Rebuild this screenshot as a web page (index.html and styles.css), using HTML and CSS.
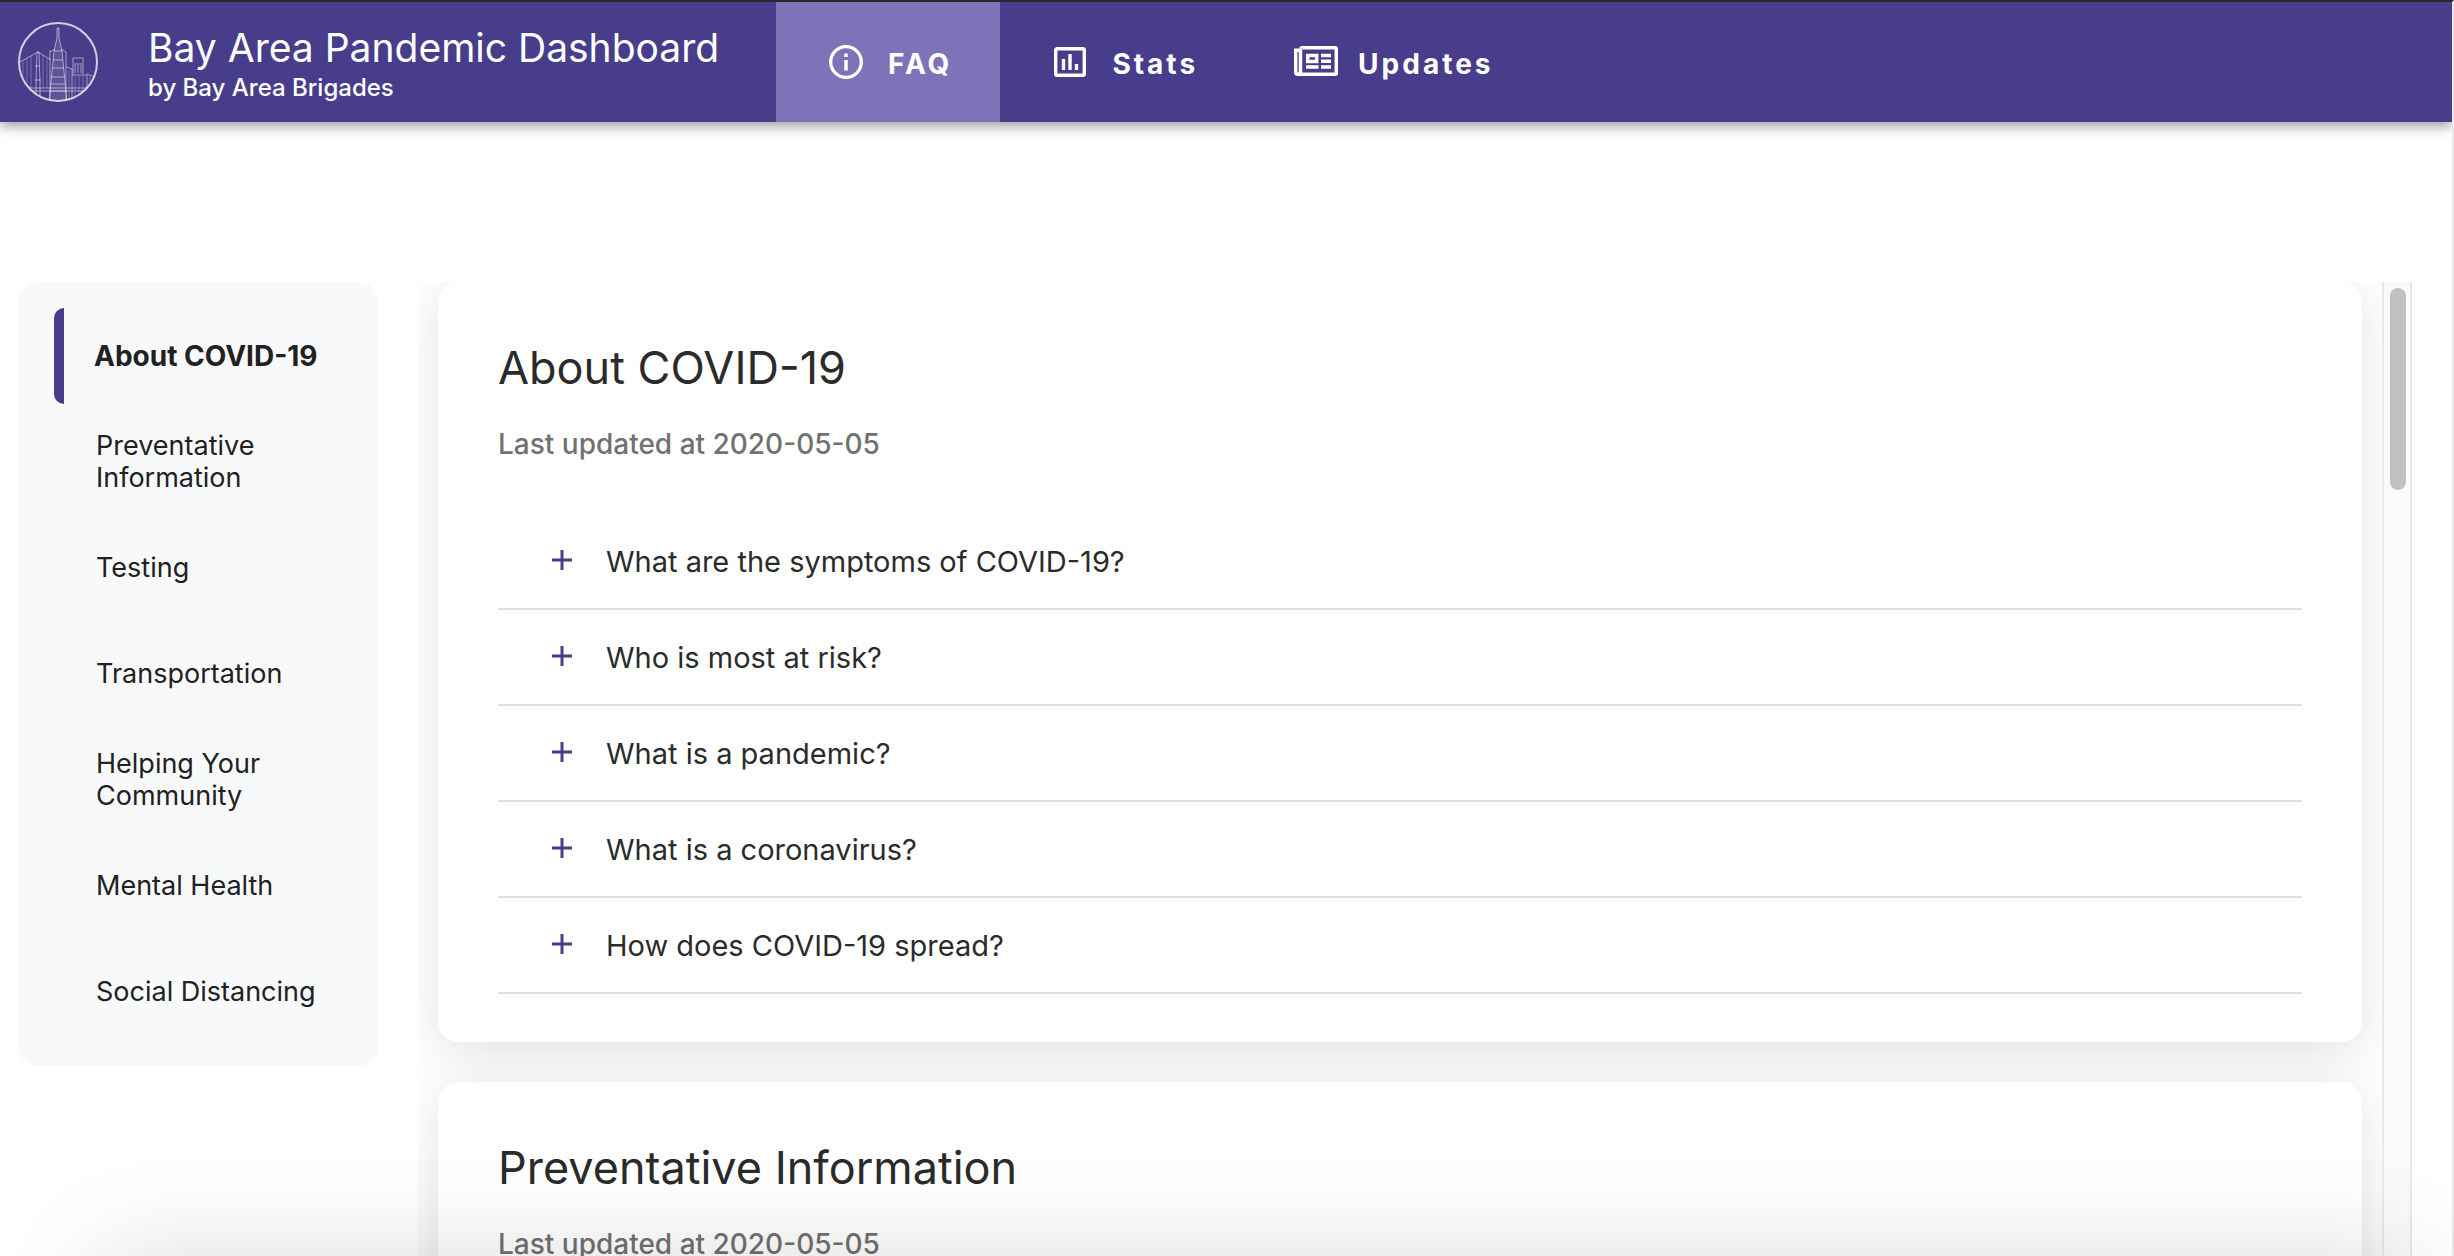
FILE: index.html
```html
<!DOCTYPE html>
<html lang="en">
<head>
  <meta charset="utf-8">
  <title>Bay Area Pandemic Dashboard</title>
  <link rel="stylesheet" href="styles.css">
</head>
<body>
  <header class="header">
    <svg class="logo" viewBox="0 0 80 80" fill="none" stroke="#fff" aria-hidden="true">
      <defs><clipPath id="disc"><circle cx="40" cy="40" r="39"/></clipPath></defs>
      <g clip-path="url(#disc)" stroke-opacity=".5">
        <path d="M2 40L20 30L33 38M0 66H80M0 69H80"/>
        <path d="M18 80V60L19 30H21L22 60V80M17 44H22M17 58H23"/>
        <path d="M5 39V66M9 36V66M13 34V66M25 33V66M29 36V66" stroke-opacity=".25"/>
        <path d="M31 80L36 29L39 16V6H41V16L44 29L49 80Z" fill="#fff" fill-opacity=".12"/>
        <path d="M36 29H44M35 38H45M34 46H46M33 55H47M33 62H47M32 69H48M32 28V80M32 30L37 27M43 27L48 30V80"/>
        <path d="M48 45L54 47V80M55 36H65V52M55 36V52M56 42H64M57 43V51M60 43V51M63 43V51M54 53H69V80M69 52L77 55"/>
        <path d="M57 54V80M61 54V80M65 54V80M72 54V80M76 56V80M51 48V80" stroke-opacity=".25"/>
      </g>
      <circle cx="40" cy="40" r="39" stroke-width="2" stroke-opacity=".75"/>
    </svg>
    <div class="brand">
      <h1 class="brand-title">Bay Area Pandemic Dashboard</h1>
      <p class="brand-sub">by Bay Area Brigades</p>
    </div>
    <nav class="tabs" aria-label="Sections">
      <a class="tab tab-active" href="#faq">
        <svg class="tab-icon" viewBox="0 0 44 34" fill="none" stroke="#fff" aria-hidden="true"><circle cx="22" cy="17" r="15.300" stroke-width="3.300"/><path d="M22 8.500V12M22 15V25.500" stroke-width="3.500"/></svg>
        FAQ
      </a>
      <a class="tab" href="#stats">
        <svg class="tab-icon" viewBox="0 0 44 34" fill="none" stroke="#fff" aria-hidden="true"><rect x="7.700" y="3.700" width="28.600" height="26.600" rx="1.500" stroke-width="3.400"/><path d="M15.500 14V25M22 9V25M28.500 19V25" stroke-width="3.400"/></svg>
        Stats
      </a>
      <a class="tab" href="#updates">
        <svg class="tab-icon" viewBox="0 0 44 34" fill="none" stroke="#fff" stroke-width="3.500" aria-hidden="true"><path d="M7 3.700Q7 2.700 8 2.700H41.300Q42.300 2.700 42.300 3.700V28.200Q42.300 29.200 41.300 29.200H3.700Q1.700 29.200 1.700 27.200V5.200H6M6.500 4V26Q6.500 29.200 4 29.200"/><rect x="13.700" y="10.500" width="9" height="6"/><path d="M27 10.500H37M27 16.200H37M27 22H37M12 22H24.500"/></svg>
        Updates
      </a>
    </nav>
  </header>

  <div class="layout" id="faq">
    <nav class="sidebar" aria-label="Topics">
      <a class="topic topic-active" href="#about">About COVID-19</a>
      <a class="topic" href="#preventative">Preventative Information</a>
      <a class="topic" href="#testing">Testing</a>
      <a class="topic" href="#transportation">Transportation</a>
      <a class="topic" href="#helping">Helping Your Community</a>
      <a class="topic" href="#mental">Mental Health</a>
      <a class="topic" href="#distancing">Social Distancing</a>
    </nav>

    <main class="cards">
      <section class="card" id="about">
        <h2 class="card-title">About COVID-19</h2>
        <p class="card-date">Last updated at 2020-05-05</p>
        <div class="questions">
          <button class="question" type="button"><svg class="plus" viewBox="0 0 20 20" aria-hidden="true"><path d="M10 0V20M0 10H20"/></svg>What are the symptoms of COVID-19?</button>
          <button class="question" type="button"><svg class="plus" viewBox="0 0 20 20" aria-hidden="true"><path d="M10 0V20M0 10H20"/></svg>Who is most at risk?</button>
          <button class="question" type="button"><svg class="plus" viewBox="0 0 20 20" aria-hidden="true"><path d="M10 0V20M0 10H20"/></svg>What is a pandemic?</button>
          <button class="question" type="button"><svg class="plus" viewBox="0 0 20 20" aria-hidden="true"><path d="M10 0V20M0 10H20"/></svg>What is a coronavirus?</button>
          <button class="question" type="button"><svg class="plus" viewBox="0 0 20 20" aria-hidden="true"><path d="M10 0V20M0 10H20"/></svg>How does COVID-19 spread?</button>
        </div>
      </section>
      <section class="card" id="preventative">
        <h2 class="card-title">Preventative Information</h2>
        <p class="card-date">Last updated at 2020-05-05</p>
      </section>
    </main>
    <div class="track" aria-hidden="true"><div class="thumb"></div></div>
  </div>
  <div class="dock" aria-hidden="true"></div>
</body>
</html>
```

FILE: styles.css
```css
* {
  box-sizing: border-box;
}

html {
  background: #fff;
}

body {
  margin: 0;
  height: 100vh;
  display: flex;
  flex-direction: column;
  overflow: hidden;
  border-top: 2px solid #282828;
  border-right: 2px solid #e8e8e8;
  color: #212121;
  font-family: Inter, "Liberation Sans", sans-serif;
}

h1,
h2,
p {
  margin: 0;
  font-weight: 400;
}

a {
  color: inherit;
  text-decoration: none;
}

.header {
  flex: none;
  display: flex;
  align-items: center;
  height: 120px;
  background: #483d8b;
  color: #fff;
  box-shadow: 0 4px 12px rgba(0, 0, 0, 0.4);
}

.logo {
  width: 80px;
  height: 80px;
  margin: 0 50px 0 18px;
}

.brand {
  width: 628px;
  padding-top: 4px;
  white-space: nowrap;
}

.brand-title {
  font-size: 39px;
  line-height: 48px;
}

.brand-sub {
  font-size: 24px;
  line-height: 32px;
  font-weight: 500;
}

.tabs {
  display: flex;
  align-self: stretch;
}

.tab {
  display: flex;
  align-items: center;
  gap: 20px;
  padding: 4px 48px 0;
  font-size: 28px;
  font-weight: 700;
  letter-spacing: 3px;
}

.tab-icon {
  width: 44px;
  height: 34px;
  margin-bottom: 4px;
}

.tab-active {
  background: #7e72b9;
}

.layout {
  flex: 1;
  min-height: 0;
  display: flex;
  align-items: flex-start;
  margin-top: 160px;
  padding: 0 40px 0 18px;
}

.sidebar {
  flex: none;
  display: flex;
  flex-direction: column;
  gap: 10px;
  width: 360px;
  padding: 26px 36px;
  border-radius: 20px;
  background: #f8f9fb;
}

.topic {
  display: flex;
  align-items: center;
  height: 96px;
  padding: 0 20px 0 42px;
  font-size: 27px;
  line-height: 32px;
}

.topic-active {
  padding: 0 0 0 30px;
  border-left: 10px solid #483d8b;
  border-radius: 10px 0 0 10px;
  font-size: 28px;
  font-weight: 700;
  white-space: nowrap;
}

.cards {
  flex: 1;
  align-self: stretch;
  display: flex;
  flex-direction: column;
  gap: 40px;
  margin-left: 40px;
  padding: 0 20px;
  overflow: hidden;
}

.card {
  flex: none;
  padding: 48px 60px;
  border-radius: 20px;
  background: #fff;
  box-shadow: 0 10px 50px rgba(0, 0, 0, 0.12);
}

.card-title {
  padding-top: 2px;
  font-size: 45px;
  line-height: 72px;
  color: #2b2b2b;
}

.card-date {
  margin: 22px 0 52px;
  font-size: 28px;
  line-height: 36px;
  font-weight: 500;
  color: #717171;
}

.question {
  display: flex;
  align-items: center;
  gap: 34px;
  width: 100%;
  height: 96px;
  padding: 0 54px;
  border: 0;
  border-bottom: 2px solid #dfdfdf;
  background: none;
  color: #2b2b2b;
  font-family: inherit;
  font-size: 29px;
  text-align: left;
}

.plus {
  width: 20px;
  height: 20px;
  margin-bottom: 2px;
  stroke: #483d8b;
  stroke-width: 3;
}

.track {
  flex: none;
  align-self: stretch;
  width: 30px;
  padding: 6px;
  border: solid #e8e8e8;
  border-width: 0 2px;
  background: #fafafa;
}

.thumb {
  width: 16px;
  height: 202px;
  border-radius: 8px;
  background: #c1c1c1;
}

/* Casts the soft shade along the bottom edge of the window. */
.dock {
  position: fixed;
  top: 100%;
  left: 100px;
  right: 40px;
  height: 300px;
  box-shadow: 0 0 110px rgba(0, 0, 0, 0.14);
}
```
